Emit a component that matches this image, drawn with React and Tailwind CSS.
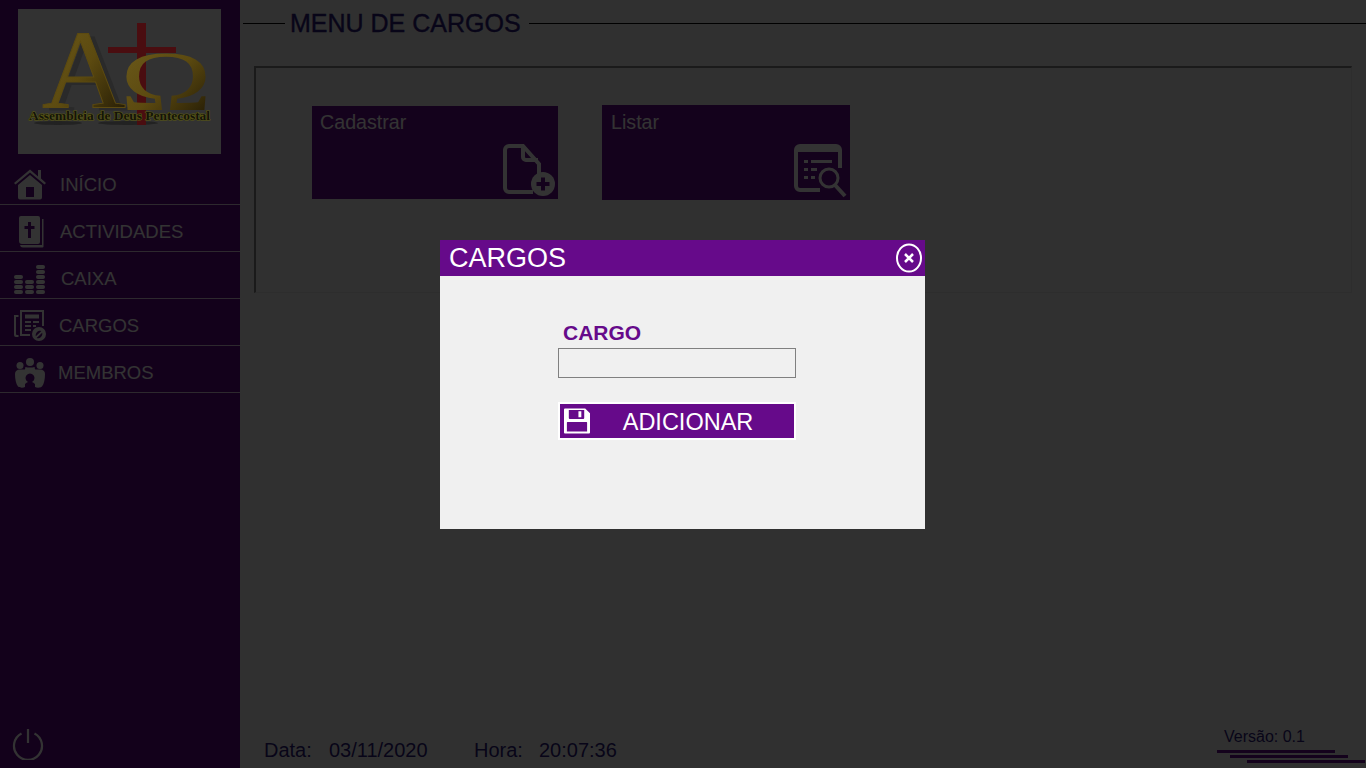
import React from 'react';

const HomeIcon = () => (
  <svg width="32" height="32" viewBox="0 0 32 32" fill="currentColor">
    <path d="M24 1h3v8.500L32 14l-1.500 1.500L16 3.500 1.500 15.500 0 14 16 .5 24 7.500z" />
    <path fillRule="evenodd" d="M16 6l12 10v12.500a2 2 0 0 1-2 2H6a2 2 0 0 1-2-2V16zM12 18v10h8V18z" />
  </svg>
);

const BibleIcon = () => (
  <svg width="26" height="32" viewBox="0 0 26 32" fill="currentColor">
    <path fillRule="evenodd" d="M3 0h17a2 2 0 0 1 2 2v24a2 2 0 0 1-2 2H4a3 3 0 0 1-3-3V2a2 2 0 0 1 2-2zM10 6v4H6.500v3H10v9h3v-9h3.500v-3H13V6z" />
    <path d="M24 3h1.500v27.500a1 1 0 0 1-1 1H5a3 3 0 0 1-3-2.500h22z" />
  </svg>
);

const CoinStack = ({ count }) => (
  <div className="flex flex-col gap-[1px]">
    {Array.from({ length: count }).map((_, i) => (
      <div key={i} className="h-[4px] w-[9px] rounded-full bg-white" />
    ))}
  </div>
);

const CoinsIcon = () => (
  <div className="flex h-[30px] items-end gap-[2px]">
    <CoinStack count={4} />
    <CoinStack count={3} />
    <CoinStack count={6} />
  </div>
);

const CargosIcon = () => (
  <svg width="32" height="32" viewBox="0 0 32 32" fill="currentColor">
    <path fillRule="evenodd" d="M6 0h24v16h-2V2H8v22h8v2H6zM11 4.500h14v4H11zM11 11h6v2h-6zM19 11h6v2h-6zM11 15h6v2h-6zM19 15h3v2h-3zM11 19h6v2h-6z" />
    <path d="M0 5h4.500v2H2v17a1 1 0 0 0 1 1h1.500v2H2a2 2 0 0 1-2-2z" />
    <path fillRule="evenodd" d="M25 17a7 7 0 1 1 0 14 7 7 0 0 1 0-14zm-3.200 9.300l5.600-5.400a4.500 4.500 0 0 0-5.600 5.400zm6.400-3.600l-5.600 5.400a4.500 4.500 0 0 0 5.600-5.400z" />
  </svg>
);

const MembersIcon = () => (
  <svg width="32" height="30" viewBox="0 0 32 30" fill="currentColor">
    <circle cx="16" cy="4" r="4" />
    <circle cx="6" cy="7.500" r="3.500" />
    <circle cx="26" cy="7.500" r="3.500" />
    <path fillRule="evenodd" d="M1 16c0-3 2-4.500 5-4.500 2 0 3.500 0 4.500 0 1 0 .5-2 1-2.500 2 .8 7 .8 9 0 .5.500 0 2.500 1 2.500h4.500c3 0 5 1.500 5 4.500 0 5-1 10-3 12.500-2 1.500-5 1.500-7 .5v-3c-1-1-2-1.500-3-2a4.500 4.500 0 1 0-4 0c-1 .5-2 1-3 2v3c-2 1-5 1-7-.5C2 26 1 21 1 16z" />
  </svg>
);

const PowerIcon = () => (
  <svg width="32" height="32" viewBox="0 0 32 32" fill="none" stroke="currentColor" strokeWidth="2.200">
    <path d="M9.500 5.500a14 14 0 1 0 13 0" />
    <path d="M16 1v14" />
  </svg>
);

const DocPlusIcon = () => (
  <svg width="54" height="56" viewBox="0 0 54 56" fill="none">
    <path d="M31 49H7a4 4 0 0 1-4-4V7a4 4 0 0 1 4-4h14l16 18v10" stroke="currentColor" strokeWidth="4" />
    <path d="M21 3v11a3 3 0 0 0 3 3h12" stroke="currentColor" strokeWidth="4" />
    <circle cx="41" cy="41" r="12" fill="currentColor" />
    <path d="M41 34.500v13M34.500 41h13" stroke="#660a8a" strokeWidth="4" />
  </svg>
);

const ListSearchIcon = () => (
  <svg width="54" height="56" viewBox="0 0 54 56" fill="none">
    <path d="M26 46H6a4 4 0 0 1-4-4V6a4 4 0 0 1 4-4h36a4 4 0 0 1 4 4v18" stroke="currentColor" strokeWidth="4" />
    <path d="M2 6h44" stroke="currentColor" strokeWidth="4" />
    <path d="M10 16h4v3h-4zM17 16h21v3H17zM10 24h4v3h-4zM17 24h6v3h-6zM10 32h4v3h-4zM17 32h4v3h-4z" fill="currentColor" />
    <circle cx="35" cy="34" r="9" fill="#660a8a" stroke="currentColor" strokeWidth="3" />
    <path d="M41 41l10 11" stroke="currentColor" strokeWidth="4" />
  </svg>
);

const FloppyIcon = () => (
  <svg width="26" height="26" viewBox="0 0 27 26" fill="#fff">
    <path fillRule="evenodd" d="M1 0h21l5 5v20a1 1 0 0 1-1 1H1a1 1 0 0 1-1-1V1a1 1 0 0 1 1-1zM5 1.500v8.500a1 1 0 0 0 1 1h14a1 1 0 0 0 1-1V1.500zM15 3h3v6h-3zM3.500 14a.5.500 0 0 0-.5.500V24h21v-9.500a.5.500 0 0 0-.5-.500z" />
  </svg>
);

// the logo stays brighter than the overlay allows, so it sits above it with its dimmed colours
const Logo = () => (
  <svg width="203" height="145" viewBox="0 0 203 145" className="relative z-10 ml-[18px] mt-[9px] block bg-[#323232]">
    <defs>
      <linearGradient id="gold" x1="0" y1="0" x2="1" y2="1">
        <stop offset="0" stopColor="#6e5c1c" />
        <stop offset="0.5" stopColor="#5c4a10" />
        <stop offset="1" stopColor="#1a1303" />
      </linearGradient>
    </defs>
    <ellipse cx="40" cy="114" rx="24" ry="2" fill="#222" />
    <ellipse cx="110" cy="114" rx="30" ry="2" fill="#222" />
    <text x="30" y="102" fontFamily="'Liberation Serif', serif" fontSize="112" textLength="84" lengthAdjust="spacingAndGlyphs" fill="#2a2a2a">A</text>
    <rect x="119" y="14" width="9" height="102" fill="#4a0d10" />
    <rect x="90" y="38" width="68" height="6" fill="#4a0d10" />
    <text x="24" y="99" fontFamily="'Liberation Serif', serif" fontSize="112" textLength="84" lengthAdjust="spacingAndGlyphs" fill="url(#gold)" stroke="#5c4a10" strokeWidth="1">A</text>
    <text x="102" y="101" fontFamily="'Liberation Serif', serif" fontSize="84" textLength="92" lengthAdjust="spacingAndGlyphs" fill="url(#gold)">Ω</text>
    <text x="11" y="111" fontFamily="'Liberation Serif', serif" fontSize="13.500" fontWeight="700" textLength="181" lengthAdjust="spacingAndGlyphs" fill="#14140a" stroke="#5c5a10" strokeWidth="1.200" paintOrder="stroke">Assembleia de Deus Pentecostal</text>
  </svg>
);

const menu = [
  { label: 'INÍCIO', icon: <HomeIcon />, iconClass: 'pl-[14px] w-[60px]' },
  { label: 'ACTIVIDADES', icon: <BibleIcon />, iconClass: 'pl-[18px] w-[60px]' },
  { label: 'CAIXA', icon: <CoinsIcon />, iconClass: 'pl-[14px] w-[61px]' },
  { label: 'CARGOS', icon: <CargosIcon />, iconClass: 'pl-[14px] w-[59px]' },
  { label: 'MEMBROS', icon: <MembersIcon />, iconClass: 'pl-[14px] w-[58px]' },
];

const Card = ({ label, icon, className, labelClass }) => (
  <div className={`relative bg-[#660a8a] text-white ${className}`}>
    <div className={`text-[19.670px] leading-[25px] ${labelClass}`}>{label}</div>
    <div className="absolute bottom-0 right-[2px] leading-none">{icon}</div>
  </div>
);

export default function App() {
  return (
    <div className="relative flex h-screen overflow-hidden bg-[#f0f0f0] font-['Liberation_Sans',sans-serif]">
      {/* Sidebar */}
      <aside className="flex w-[240px] shrink-0 flex-col bg-[#600886] text-white">
        <Logo />
        <nav className="mt-[4px]">
          {menu.map(item => (
            <div key={item.label} className="flex h-[47px] items-center border-b border-white/80 pt-[8px]">
              <div className={`flex shrink-0 items-center ${item.iconClass}`}>{item.icon}</div>
              <span className="text-[18.500px]">{item.label}</span>
            </div>
          ))}
        </nav>
        <div className="mt-auto pb-[8px] pl-[12px]">
          <PowerIcon />
        </div>
      </aside>

      {/* Main */}
      <main className="flex min-w-0 flex-1 flex-col">
        <div className="mt-[9px] flex items-center">
          <div className="ml-[3px] h-px w-[42px] bg-black" />
          <h1 className="mx-[5px] text-[25px] leading-[29px] text-[#2c1a7a] [-webkit-text-stroke:0.4px_#2c1a7a]">MENU DE CARGOS</h1>
          <div className="ml-[3px] h-px flex-1 bg-black" />
        </div>
        <section className="mx-[14px] mt-[28px] flex h-[227px] items-start gap-[44px] border-b border-l-2 border-r border-t-2 border-b-[#e0e0e0] border-l-[#808080] border-r-[#e0e0e0] border-t-[#808080] pl-[56px] pt-[37px]">
          <Card label="Cadastrar" icon={<DocPlusIcon />} className="mt-px h-[93px] w-[246px]" labelClass="pl-[8px] pt-[4px]" />
          <Card label="Listar" icon={<ListSearchIcon />} className="h-[95px] w-[248px]" labelClass="pl-[9px] pt-[5px]" />
        </section>
        <footer className="mt-auto flex items-end justify-between">
          <div className="mb-[6px] ml-[24px] flex text-[20px] leading-[24px] text-[#2c1a7a]">
            <span className="w-[65px]">Data:</span>
            <span className="w-[145px]">03/11/2020</span>
            <span className="w-[65px]">Hora:</span>
            <span>20:07:36</span>
          </div>
          <div className="mb-[5px] mr-px w-[148px]">
            <div className="mb-[4px] pl-[7px] text-[16px] leading-[18px] text-[#2c1a7a]">Versão: 0.1</div>
            <div className="h-[3px] w-[118px] bg-[#660a8a]" />
            <div className="ml-[13px] mt-[2px] h-[3px] w-[118px] bg-[#660a8a]" />
            <div className="ml-[30px] mt-[2px] h-[3px] w-[118px] bg-[#660a8a]" />
          </div>
        </footer>
      </main>

      {/* Modal */}
      <div className="absolute inset-0 flex items-center justify-center bg-[rgba(0,0,0,0.8)] pr-px">
        <div className="flex h-[289px] w-[485px] flex-col bg-[#f0f0f0]">
          <div className="flex h-[36px] shrink-0 items-center justify-between bg-[#660a8a] pl-[9px] pr-[3px] text-white">
            <span className="text-[27px] leading-[36px]">CARGOS</span>
            <svg width="26" height="30" viewBox="0 0 26 30" fill="none" stroke="#fff">
              <ellipse cx="13" cy="15" rx="12" ry="13.500" strokeWidth="2" />
              <path d="M9 11l8 8M17 11l-8 8" strokeWidth="2.500" />
            </svg>
          </div>
          <div className="ml-[118px] mt-[44px] w-[238px]">
            <label className="block pl-[5px] text-[21px] font-bold leading-[26px] text-[#660a8a]">CARGO</label>
            <input className="mt-[2px] block h-[30px] w-full border border-[#808080] bg-[#f0f0f0]" />
            <button className="relative mt-[24px] block h-[38px] w-full border-2 border-white bg-[#660a8a] text-center text-white">
              <span className="absolute left-[4px] top-[4px]"><FloppyIcon /></span>
              <span className="pl-[22px] text-[23.500px] leading-[36px]">ADICIONAR</span>
            </button>
          </div>
        </div>
      </div>
    </div>
  );
}
